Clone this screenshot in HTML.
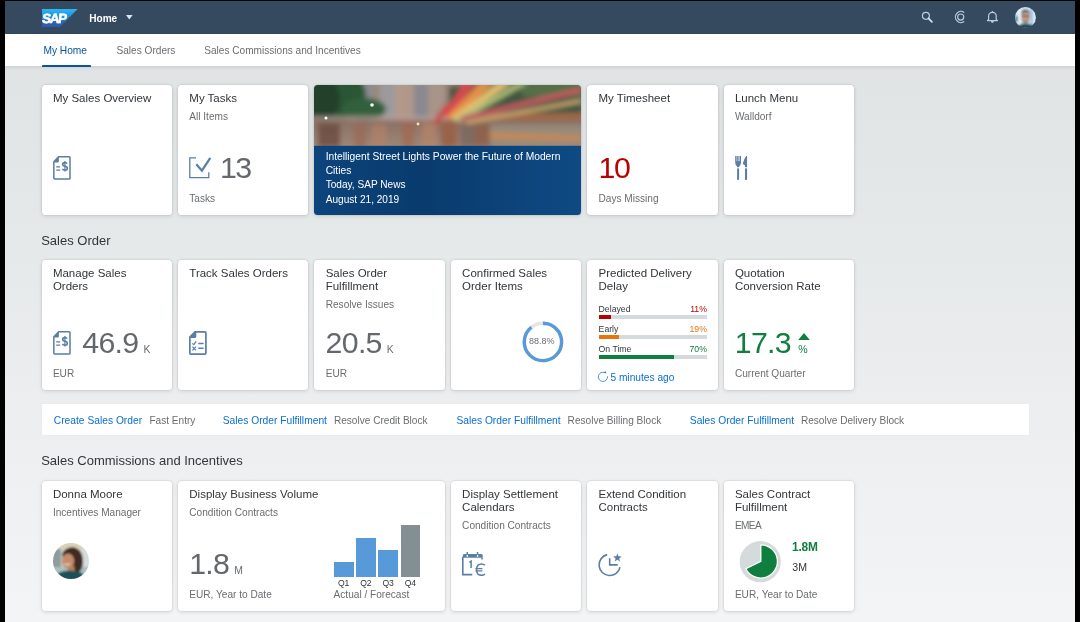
<!DOCTYPE html>
<html><head><meta charset="utf-8">
<style>
html,body{margin:0;padding:0;}
body{width:1080px;height:622px;overflow:hidden;background:#000;position:relative;font-family:"Liberation Sans",sans-serif;}
#pg{position:absolute;left:5px;top:1px;width:1070px;height:621px;background:linear-gradient(to bottom,#dfe3e4 0%,#dfe3e4 8%,#f3f4f5 100%);overflow:hidden}
.t{position:absolute;white-space:nowrap;}
.tile{position:absolute;background:#fff;border-radius:3.5px;box-shadow:0 0 0 0.5px rgba(0,0,0,0.09),0 1px 4px rgba(0,0,0,0.13);overflow:hidden}
.u{font-size:10.4px;letter-spacing:0;margin-left:5px;color:#6a6d70}
</style></head><body>
<div id="pg"></div>
<div id="root" style="position:absolute;left:0;top:0;width:1080px;height:622px;will-change:transform">
<div style="position:absolute;left:5px;top:1px;width:1070px;height:32.8px;background:#354a5f"></div>
<svg style="position:absolute;left:41.5px;top:8.8px" width="36" height="18.2" viewBox="0 0 36 18">
<defs><linearGradient id="lg" x1="0" y1="0" x2="0" y2="1"><stop offset="0" stop-color="#2bb8f2"/><stop offset="0.6" stop-color="#1a7dd0"/><stop offset="0.75" stop-color="#2f5fb4"/><stop offset="1" stop-color="#3158ae"/></linearGradient></defs>
<path d="M0 0H35.6L18 18H0Z" fill="url(#lg)"/>
<text x="-0.2" y="13.7" font-family="Liberation Sans" font-weight="700" font-size="13.4" fill="#fff" stroke="#fff" stroke-width="0.55" letter-spacing="-1.3" transform="skewX(-6)" transform-origin="0 14">SAP</text>
</svg>
<div class="t " style="left:89.20px;top:11.80px;font-size:10.1px;line-height:13px;color:#ffffff;font-weight:700;">Home</div>
<svg style="position:absolute;left:125.8px;top:15.4px" width="7" height="5" viewBox="0 0 7 5"><path d="M0 0H6.6L3.3 4.6Z" fill="#d1e8ff"/></svg>
<svg style="position:absolute;left:0;top:0" width="1080" height="34" viewBox="0 0 1080 34" fill="none" stroke="#bccde0">
<circle cx="925.9" cy="15.8" r="3.45" stroke-width="1.25"/><path d="M928.5 18.4L931.9 21.8" stroke="#d3e4f5" stroke-width="1.7" stroke-linecap="round"/>
<path d="M964.2 12.4A5.6 5.6 0 1 0 964.2 21.6" stroke-width="1.2"/><circle cx="960.7" cy="17" r="3.05" stroke-width="1.15"/>
<path d="M988.6 19.4V15.9A3.8 3.6 0 0 1 996.2 15.9V19.4L997.4 20.6H987.4Z" stroke-width="1.2" stroke-linejoin="round"/>
<circle cx="992.4" cy="11.9" r="0.8" fill="#bccde0" stroke="none"/>
<path d="M990.9 21.2H993.9Q993.6 22.8 992.4 22.8Q991.2 22.8 990.9 21.2Z" fill="#d3e4f5" stroke="none"/>
</svg>
<svg style="position:absolute;left:1014.8px;top:7px" width="21" height="21" viewBox="0 0 21 21">
<defs><clipPath id="ca"><circle cx="10.45" cy="10.45" r="10.45"/></clipPath><filter id="ba" filterUnits="userSpaceOnUse" x="-5" y="-5" width="31" height="31"><feGaussianBlur stdDeviation="0.9"/></filter></defs>
<g clip-path="url(#ca)"><g filter="url(#ba)"><rect x="-2" y="-2" width="25" height="25" fill="#cfe2ee"/>
<rect x="0" y="9" width="3.5" height="6" fill="#1f8a96"/><rect x="3" y="0" width="3" height="21" fill="#e8f2f8"/><rect x="16" y="0" width="2" height="21" fill="#8fbbe0"/><rect x="18" y="0" width="3" height="21" fill="#e6eff5"/>
<ellipse cx="10.6" cy="10.6" rx="4.4" ry="5.6" fill="#c49a84"/>
<path d="M6 8Q6 2.5 10.8 2.6Q15.4 2.8 15.2 8L14 6Q11 4.5 7.4 6.2Z" fill="#5e5e5e"/>
<rect x="6.6" y="8.4" width="8.2" height="1.2" fill="#4a4e52"/>
<path d="M7.6 12.6Q10.6 16.6 13.8 12.6L13.6 15Q10.6 17 7.8 15Z" fill="#8a7a70"/>
<path d="M1 22Q3 16.6 10.5 16.6Q18 16.6 20 22Z" fill="#1f4a52"/></g></g></svg>
<div style="position:absolute;left:5px;top:33.8px;width:1070px;height:32.7px;background:#fff;box-shadow:0 1px 4px rgba(0,0,0,0.12)"></div>
<div class="t " style="left:43.40px;top:44.07px;font-size:10.2px;line-height:13px;color:#0854a0;">My Home</div>
<div style="position:absolute;left:41.6px;top:64.5px;width:49px;height:2px;background:#0854a0;border-radius:1px 1px 0 0"></div>
<div class="t " style="left:116.50px;top:44.10px;font-size:10.1px;line-height:13px;color:#6a6d70;">Sales Orders</div>
<div class="t " style="left:204.20px;top:44.10px;font-size:10.1px;line-height:13px;color:#6a6d70;">Sales Commissions and Incentives</div>
<div class="tile" style="left:41.50px;top:84.60px;width:130.50px;height:130.50px;"></div>
<div class="t " style="left:52.90px;top:91.52px;font-size:11.5px;line-height:13px;color:#32363a;">My Sales Overview</div>
<svg style="position:absolute;left:52.70px;top:155.90px" width="18" height="24" viewBox="0 0 18 24" fill="none" stroke="#5a7ea4">
<path d="M5.6 0.8H16.1Q17 0.8 17 1.7V22.2Q17 23 16.1 23H1.8Q0.85 23 0.85 22.1V5.7Z" stroke-width="1.5"/>
<path d="M0.6 6.2L5.9 0.6V5.2Q5.9 6.5 4.6 6.5H0.6Z" fill="#5a7ea4" stroke="none"/>
<path d="M3.2 10.9H7.1M3.2 14.1H7.1" stroke-width="1.3"/>
<path d="M14.1 7.7Q13.5 6.6 11.9 6.6Q9.6 6.6 9.6 8.5Q9.6 9.9 11.9 10.3Q14.3 10.7 14.3 12.4Q14.3 14.1 11.9 14.1Q10.1 14.1 9.4 12.8" stroke-width="1.6"/><path d="M11.9 5V15.6" stroke-width="1.2"/>
</svg>
<div class="tile" style="left:177.90px;top:84.60px;width:130.50px;height:130.50px;"></div>
<div class="t " style="left:189.30px;top:91.52px;font-size:11.5px;line-height:13px;color:#32363a;">My Tasks</div>
<div class="t " style="left:189.30px;top:110.00px;font-size:10.1px;line-height:13px;color:#6a6d70;">All Items</div>
<svg style="position:absolute;left:189.10px;top:156.70px" width="23" height="22" viewBox="0 0 23 22" fill="none" stroke="#5a7ea4">
<path d="M7 0.8H0.8V20.6H19.8V15.3" stroke-width="1.3"/>
<path d="M7.3 7.2L12.9 13.6L21.3 0.9" stroke-width="2.2"/></svg>
<div class="t " style="left:219.90px;top:149.00px;font-size:30.3px;line-height:38px;color:#64686d;letter-spacing:-1.4px;">13</div>
<div class="t " style="left:189.30px;top:191.80px;font-size:10.1px;line-height:13px;color:#6a6d70;">Tasks</div>
<div class="tile news" style="left:314.30px;top:84.60px;width:266.90px;height:130.50px;">
<svg width="267" height="131" viewBox="0 0 267 131" style="position:absolute;left:0;top:0">
<defs>
<linearGradient id="sky" x1="0" y1="0" x2="1" y2="0"><stop offset="0" stop-color="#2c3b2f"/><stop offset="0.2" stop-color="#8a7c70"/><stop offset="0.3" stop-color="#b59a8a"/><stop offset="0.45" stop-color="#a8928a"/><stop offset="0.55" stop-color="#8a7466"/><stop offset="1" stop-color="#5f6650"/></linearGradient>
<linearGradient id="grd" x1="0" y1="0" x2="0" y2="1"><stop offset="0" stop-color="#8a6e62"/><stop offset="1" stop-color="#a08a7a"/></linearGradient>
<filter id="bl" filterUnits="userSpaceOnUse" x="-10" y="-10" width="290" height="90"><feGaussianBlur stdDeviation="2.6"/></filter>
<filter id="bl2" filterUnits="userSpaceOnUse" x="-10" y="-10" width="290" height="90"><feGaussianBlur stdDeviation="0.7"/></filter>
<linearGradient id="ov" x1="0" y1="0" x2="1" y2="0"><stop offset="0" stop-color="#0d447c"/><stop offset="0.4" stop-color="#093b6d"/><stop offset="1" stop-color="#0f4a84"/></linearGradient>
</defs>
<g filter="url(#bl)">
<rect x="-5" y="-5" width="280" height="75" fill="url(#sky)"/>
<rect x="44" y="-2" width="16" height="38" fill="#8e8c90"/>
<rect x="66" y="-2" width="15" height="36" fill="#9c9a9e"/>
<rect x="100" y="-2" width="14" height="34" fill="#8a8890"/>
<rect x="116" y="-2" width="14" height="26" fill="#a89488"/>
<ellipse cx="20" cy="10" rx="32" ry="26" fill="#2c5636"/><ellipse cx="50" cy="24" rx="22" ry="11" fill="#33603c"/><ellipse cx="8" cy="14" rx="18" ry="22" fill="#20402a"/>
<rect x="-5" y="31" width="140" height="6" fill="#b8a09a" opacity="0.7"/>
<path d="M135 2L267 -5V40H135Z" fill="#3f5640"/>
<path d="M200 -5H267V12H210Z" fill="#557048"/>
<rect x="160" y="28" width="110" height="10" fill="#c0704a" opacity="0.75"/>
<rect x="-5" y="35" width="280" height="30" fill="url(#grd)"/>
<rect x="175" y="40" width="95" height="22" fill="#958a7a"/>
<path d="M170 47L267 50V56L175 54Z" fill="#d08850" opacity="0.8"/>
<path d="M118 38L132 18L137 20L123 40Z" fill="#c84848"/>
<path d="M128 30L150 -2H162L134 33Z" fill="#d84a50"/>
<path d="M132 32L166 -2H180L138 35Z" fill="#e89048"/>
<path d="M136 33L184 -2H198L142 36Z" fill="#e0c070"/>
<path d="M140 34L204 -2H214L146 37Z" fill="#b8c880" opacity="0.9"/>
<path d="M145 32L267 2V8L150 36Z" fill="#c05860"/>
<path d="M150 36L267 14V18L154 39Z" fill="#c8a870"/>
<rect x="4" y="38" width="22" height="24" fill="#6a4a3e" opacity="0.8"/>
<rect x="40" y="38" width="12" height="24" fill="#9a6a56" opacity="0.8"/>
<rect x="58" y="40" width="14" height="22" fill="#b48268" opacity="0.7"/>
<rect x="88" y="36" width="12" height="26" fill="#a06a50" opacity="0.8"/>
<rect x="108" y="38" width="14" height="24" fill="#b8846a" opacity="0.7"/>
<rect x="127" y="36" width="16" height="26" fill="#9a6248"/>
<rect x="146" y="40" width="14" height="22" fill="#7a6660" opacity="0.8"/>
<rect x="160" y="38" width="16" height="24" fill="#8a5e48" opacity="0.8"/>
</g>
<g filter="url(#bl2)" fill="#fff"><circle cx="58" cy="20" r="1.8"/><circle cx="12" cy="33" r="1.5"/><circle cx="104" cy="39" r="1.4" fill="#ffe8b0"/></g>
<rect x="0" y="60.8" width="267" height="71" fill="url(#ov)"/>
</svg></div>
<div class="t " style="left:325.70px;top:149.95px;font-size:10.25px;line-height:14px;color:#ffffff;">Intelligent Street Lights Power the Future of Modern<br>Cities</div>
<div class="t " style="left:325.70px;top:178.20px;font-size:10.1px;line-height:13px;color:#ffffff;">Today, SAP News</div>
<div class="t " style="left:325.70px;top:192.50px;font-size:10.1px;line-height:13px;color:#ffffff;">August 21, 2019</div>
<div class="tile" style="left:587.10px;top:84.60px;width:130.50px;height:130.50px;"></div>
<div class="t " style="left:598.50px;top:91.52px;font-size:11.5px;line-height:13px;color:#32363a;">My Timesheet</div>
<div class="t " style="left:598.40px;top:148.90px;font-size:30.3px;line-height:38px;color:#bb0000;letter-spacing:-1.2px;">10</div>
<div class="t " style="left:598.50px;top:191.80px;font-size:10.1px;line-height:13px;color:#6a6d70;">Days Missing</div>
<div class="tile" style="left:723.50px;top:84.60px;width:130.50px;height:130.50px;"></div>
<div class="t " style="left:734.90px;top:91.52px;font-size:11.5px;line-height:13px;color:#32363a;">Lunch Menu</div>
<div class="t " style="left:734.90px;top:110.00px;font-size:10.1px;line-height:13px;color:#6a6d70;">Walldorf</div>
<svg style="position:absolute;left:734.80px;top:155.80px" width="14" height="24" viewBox="0 0 14 24" fill="#5a7ea4">
<path d="M0.2 0H6V6.6Q6 9.4 4.1 10.6V11.2H2.1V10.6Q0.2 9.4 0.2 6.6Z"/>
<rect x="1.6" y="0" width="0.5" height="5.2" fill="#fff"/><rect x="2.9" y="0" width="0.5" height="5.2" fill="#fff"/><rect x="4.2" y="0" width="0.5" height="5.2" fill="#fff"/>
<rect x="2.1" y="12.2" width="2" height="11.8" rx="0.8"/>
<path d="M11.1 0H12.1V11.2H10V9.4Q7.8 8.6 7.9 7.2Q9.2 2.6 11.1 0Z"/>
<rect x="10" y="12.2" width="2.1" height="11.8" rx="0.8"/></svg>
<div class="t " style="left:41.20px;top:232.60px;font-size:13.0px;line-height:16px;color:#32363a;">Sales Order</div>
<div class="tile" style="left:41.50px;top:259.60px;width:130.50px;height:130.50px;"></div>
<div class="t " style="left:52.90px;top:266.52px;font-size:11.5px;line-height:13px;color:#32363a;">Manage Sales<br>Orders</div>
<svg style="position:absolute;left:52.70px;top:331.10px" width="18" height="24" viewBox="0 0 18 24" fill="none" stroke="#5a7ea4">
<path d="M5.6 0.8H16.1Q17 0.8 17 1.7V22.2Q17 23 16.1 23H1.8Q0.85 23 0.85 22.1V5.7Z" stroke-width="1.5"/>
<path d="M0.6 6.2L5.9 0.6V5.2Q5.9 6.5 4.6 6.5H0.6Z" fill="#5a7ea4" stroke="none"/>
<path d="M3.2 10.9H7.1M3.2 14.1H7.1" stroke-width="1.3"/>
<path d="M14.1 7.7Q13.5 6.6 11.9 6.6Q9.6 6.6 9.6 8.5Q9.6 9.9 11.9 10.3Q14.3 10.7 14.3 12.4Q14.3 14.1 11.9 14.1Q10.1 14.1 9.4 12.8" stroke-width="1.6"/><path d="M11.9 5V15.6" stroke-width="1.2"/>
</svg>
<div class="t " style="left:82.30px;top:323.50px;font-size:30.3px;line-height:38px;color:#64686d;letter-spacing:-0.7px;">46.9<span class="u">K</span></div>
<div class="t " style="left:52.90px;top:366.80px;font-size:10.1px;line-height:13px;color:#6a6d70;">EUR</div>
<div class="tile" style="left:177.90px;top:259.60px;width:130.50px;height:130.50px;"></div>
<div class="t " style="left:189.30px;top:266.52px;font-size:11.5px;line-height:13px;color:#32363a;">Track Sales Orders</div>
<svg style="position:absolute;left:189.00px;top:330.90px" width="18" height="24" viewBox="0 0 18 24" fill="none" stroke="#5a7ea4">
<path d="M6 0.85H16Q16.9 0.85 16.9 1.8V22.1Q16.9 23.1 16 23.1H1.8Q0.85 23.1 0.85 22.1V6Z" stroke-width="1.7"/>
<path d="M0.5 6.6L6.6 0.5H7.3V5.4Q7.3 7 5.7 7H0.5Z" fill="#5a7ea4" stroke="none"/>
<path d="M3.2 12.4L4.8 13.7L7.1 10.4" stroke-width="1.2"/>
<path d="M3.4 15.6L7 19.3M7 15.6L3.4 19.3" stroke-width="1.2"/>
<path d="M9.3 12.5H14.6M9.3 17.2H14.6" stroke-width="1.6"/></svg>
<div class="tile" style="left:314.30px;top:259.60px;width:130.50px;height:130.50px;"></div>
<div class="t " style="left:325.70px;top:266.52px;font-size:11.5px;line-height:13px;color:#32363a;">Sales Order<br>Fulfillment</div>
<div class="t " style="left:325.70px;top:297.70px;font-size:10.1px;line-height:13px;color:#6a6d70;">Resolve Issues</div>
<div class="t " style="left:325.60px;top:323.70px;font-size:30.3px;line-height:38px;color:#64686d;letter-spacing:-0.7px;">20.5<span class="u">K</span></div>
<div class="t " style="left:325.70px;top:366.80px;font-size:10.1px;line-height:13px;color:#6a6d70;">EUR</div>
<div class="tile" style="left:450.70px;top:259.60px;width:130.50px;height:130.50px;"></div>
<div class="t " style="left:462.10px;top:266.52px;font-size:11.5px;line-height:13px;color:#32363a;">Confirmed Sales<br>Order Items</div>
<svg style="position:absolute;left:450.70px;top:259.60px" width="131" height="131" viewBox="0 0 130.5 130.5" fill="none">
<circle cx="91.60" cy="81.60" r="18.6" stroke="#e5e5e5" stroke-width="3.4"/>
<circle cx="91.60" cy="81.60" r="18.6" stroke="#5899da" stroke-width="3.4" stroke-dasharray="103.78 116.87" transform="rotate(-90 91.60 81.60)"/>
</svg>
<div class="t " style="left:529.00px;top:335.68px;font-size:9.0px;line-height:11px;color:#6a6d70;">88.8%</div>
<div class="tile" style="left:587.10px;top:259.60px;width:130.50px;height:130.50px;"></div>
<div class="t " style="left:598.50px;top:266.52px;font-size:11.5px;line-height:13px;color:#32363a;">Predicted Delivery<br>Delay</div>
<div class="t " style="left:598.60px;top:304.09px;font-size:8.7px;line-height:11px;color:#32363a;">Delayed</div>
<div class="t " style="right:373.10px;top:304.09px;font-size:8.7px;line-height:11px;color:#bb0000;text-align:right;">11%</div>
<div style="position:absolute;left:598.7px;top:314.9px;width:108.2px;height:4.1px;background:#d5dadd"></div>
<div style="position:absolute;left:598.7px;top:314.9px;width:11.90px;height:4.1px;background:#bb0000"></div>
<div class="t " style="left:598.60px;top:323.89px;font-size:8.7px;line-height:11px;color:#32363a;">Early</div>
<div class="t " style="right:373.10px;top:323.89px;font-size:8.7px;line-height:11px;color:#e9730c;text-align:right;">19%</div>
<div style="position:absolute;left:598.7px;top:335.0px;width:108.2px;height:4.1px;background:#d5dadd"></div>
<div style="position:absolute;left:598.7px;top:335.0px;width:20.56px;height:4.1px;background:#e9730c"></div>
<div class="t " style="left:598.60px;top:344.19px;font-size:8.7px;line-height:11px;color:#32363a;">On Time</div>
<div class="t " style="right:373.10px;top:344.19px;font-size:8.7px;line-height:11px;color:#107e3e;text-align:right;">70%</div>
<div style="position:absolute;left:598.7px;top:355.0px;width:108.2px;height:4.1px;background:#d5dadd"></div>
<div style="position:absolute;left:598.7px;top:355.0px;width:75.74px;height:4.1px;background:#107e3e"></div>
<svg style="position:absolute;left:594.4px;top:368px" width="14" height="16" viewBox="0 0 14 16" fill="none" stroke="#3f8ee0" stroke-width="0.95">
<path d="M13.5 8.3A4.6 4.6 0 1 1 10.9 4.7"/><circle cx="11.3" cy="4.3" r="0.9" fill="#0a6ed1" stroke="none"/></svg>
<div class="t " style="left:610.40px;top:371.37px;font-size:10.2px;line-height:13px;color:#0a6ed1;">5 minutes ago</div>
<div class="tile" style="left:723.50px;top:259.60px;width:130.50px;height:130.50px;"></div>
<div class="t " style="left:734.90px;top:266.52px;font-size:11.5px;line-height:13px;color:#32363a;">Quotation<br>Conversion Rate</div>
<div class="t " style="left:734.80px;top:323.70px;font-size:30.3px;line-height:38px;color:#107e3e;letter-spacing:-0.7px;">17.3</div>
<svg style="position:absolute;left:798px;top:332.6px" width="12" height="7.3" viewBox="0 0 12 7.3"><path d="M0 7.2L6 0L12 7.2Z" fill="#107e3e"/></svg>
<div class="t " style="left:798.30px;top:343.03px;font-size:10.6px;line-height:13px;color:#107e3e;">%</div>
<div class="t " style="left:734.90px;top:366.80px;font-size:10.1px;line-height:13px;color:#6a6d70;">Current Quarter</div>
<div style="position:absolute;left:42px;top:403.6px;width:986.6px;height:31.3px;background:#fff;box-shadow:0 0 1px rgba(0,0,0,0.08)"></div>
<div class="t " style="left:53.80px;top:413.95px;font-size:10.25px;line-height:13px;color:#0a6ed1;">Create Sales Order</div>
<div class="t " style="left:149.40px;top:413.50px;font-size:10.1px;line-height:13px;color:#6a6d70;">Fast Entry</div>
<div class="t " style="left:222.70px;top:413.95px;font-size:10.25px;line-height:13px;color:#0a6ed1;">Sales Order Fulfillment</div>
<div class="t " style="left:333.90px;top:413.50px;font-size:10.1px;line-height:13px;color:#6a6d70;">Resolve Credit Block</div>
<div class="t " style="left:456.40px;top:413.95px;font-size:10.25px;line-height:13px;color:#0a6ed1;">Sales Order Fulfillment</div>
<div class="t " style="left:567.60px;top:413.50px;font-size:10.1px;line-height:13px;color:#6a6d70;">Resolve Billing Block</div>
<div class="t " style="left:689.80px;top:413.95px;font-size:10.25px;line-height:13px;color:#0a6ed1;">Sales Order Fulfillment</div>
<div class="t " style="left:800.90px;top:413.50px;font-size:10.1px;line-height:13px;color:#6a6d70;">Resolve Delivery Block</div>
<div class="t " style="left:41.20px;top:453.30px;font-size:13.0px;line-height:16px;color:#32363a;">Sales Commissions and Incentives</div>
<div class="tile" style="left:41.50px;top:480.90px;width:130.50px;height:130.50px;"></div>
<div class="t " style="left:52.90px;top:487.82px;font-size:11.5px;line-height:13px;color:#32363a;">Donna Moore</div>
<div class="t " style="left:52.90px;top:506.30px;font-size:10.1px;line-height:13px;color:#6a6d70;">Incentives Manager</div>
<svg style="position:absolute;left:52.9px;top:543px" width="36" height="36" viewBox="0 0 36 36">
<defs><clipPath id="cd"><circle cx="18" cy="18" r="18"/></clipPath><filter id="bd" filterUnits="userSpaceOnUse" x="-5" y="-5" width="46" height="46"><feGaussianBlur stdDeviation="0.8"/></filter></defs>
<g clip-path="url(#cd)"><g filter="url(#bd)"><rect x="-2" y="-2" width="40" height="40" fill="#c9cfcc"/>
<rect x="-2" y="-2" width="40" height="8" fill="#d9d2b8"/><rect x="-2" y="6" width="10" height="22" fill="#8e9c9c"/><rect x="28" y="6" width="10" height="24" fill="#d5dcdc"/>
<rect x="-2" y="24" width="40" height="6" fill="#a8c0c0"/>
<path d="M9 11Q13 3 22 4.5Q30 8 30 18Q30 26 26 29L20 29Q17 22 18 15Q14 12 10 15Z" fill="#3f2b22"/>
<ellipse cx="15" cy="18" rx="6.2" ry="7.4" fill="#c48d6a"/>
<path d="M15 24Q19 25 21 22L22 29H15Z" fill="#b88060"/>
<path d="M11.5 20.8Q14 22.6 17 21" stroke="#f2e6dc" stroke-width="1.1" fill="none"/>
<path d="M-2 38Q2 28 17 27.5Q32 28 38 38Z" fill="#1e4f56"/></g></g></svg>
<div class="tile" style="left:177.90px;top:480.90px;width:267.60px;height:130.50px;"></div>
<div class="t " style="left:189.30px;top:487.82px;font-size:11.5px;line-height:13px;color:#32363a;">Display Business Volume</div>
<div class="t " style="left:189.30px;top:506.30px;font-size:10.1px;line-height:13px;color:#6a6d70;">Condition Contracts</div>
<div class="t " style="left:189.20px;top:544.50px;font-size:30.3px;line-height:38px;color:#64686d;letter-spacing:-0.7px;">1.8<span class="u">M</span></div>
<div class="t " style="left:189.30px;top:588.10px;font-size:10.1px;line-height:13px;color:#6a6d70;">EUR, Year to Date</div>
<div style="position:absolute;left:333.75px;top:562px;width:19.8px;height:14.60px;background:#5899da"></div>
<div class="t" style="left:328.75px;top:578.02px;width:29.8px;text-align:center;font-size:8.6px;line-height:11px;color:#32363a">Q1</div>
<div style="position:absolute;left:356px;top:538px;width:19.8px;height:38.60px;background:#5899da"></div>
<div class="t" style="left:351.00px;top:578.02px;width:29.8px;text-align:center;font-size:8.6px;line-height:11px;color:#32363a">Q2</div>
<div style="position:absolute;left:378.25px;top:549.75px;width:19.8px;height:26.85px;background:#5899da"></div>
<div class="t" style="left:373.25px;top:578.02px;width:29.8px;text-align:center;font-size:8.6px;line-height:11px;color:#32363a">Q3</div>
<div style="position:absolute;left:400.5px;top:525.25px;width:19.8px;height:51.35px;background:#848f94"></div>
<div class="t" style="left:395.50px;top:578.02px;width:29.8px;text-align:center;font-size:8.6px;line-height:11px;color:#32363a">Q4</div>
<div class="t " style="left:333.60px;top:587.50px;font-size:10.1px;line-height:13px;color:#6a6d70;">Actual / Forecast</div>
<div class="tile" style="left:450.70px;top:480.90px;width:130.50px;height:130.50px;"></div>
<div class="t " style="left:462.10px;top:487.82px;font-size:11.5px;line-height:13px;color:#32363a;">Display Settlement<br>Calendars</div>
<div class="t " style="left:462.10px;top:519.00px;font-size:10.1px;line-height:13px;color:#6a6d70;">Condition Contracts</div>
<svg style="position:absolute;left:462.1px;top:552.1px" width="24" height="24" viewBox="0 0 24 24" fill="none" stroke="#5a7ea4">
<path d="M0.8 3.4Q0.8 1.9 2.2 1.9H19.3Q20.7 1.9 20.7 3.4V5.8H0.8Z" fill="#5a7ea4" stroke="none"/>
<rect x="4.5" y="0" width="1.5" height="2.6" fill="#5a7ea4" stroke="none"/><rect x="14.8" y="0" width="1.5" height="2.6" fill="#5a7ea4" stroke="none"/>
<rect x="4.6" y="2.8" width="1.3" height="2" fill="#fff" stroke="none"/><rect x="14.9" y="2.8" width="1.3" height="2" fill="#fff" stroke="none"/>
<path d="M0.8 5V22.6H10.3" stroke-width="1.6"/><path d="M19.95 5.5V7.4" stroke-width="1.5"/>
<path d="M7.4 10.3L9.1 9.1V16.1" stroke-width="1.5"/>
<path d="M23 13.3Q21.6 12 19.6 12Q14.6 12 14.6 17.7Q14.6 23.3 19.6 23.3Q21.6 23.3 23 22" stroke-width="1.5"/>
<path d="M13.4 16.6H20.4M13.4 18.9H20.4" stroke-width="1.3"/></svg>
<div class="tile" style="left:587.10px;top:480.90px;width:130.50px;height:130.50px;"></div>
<div class="t " style="left:598.50px;top:487.82px;font-size:11.5px;line-height:13px;color:#32363a;">Extend Condition<br>Contracts</div>
<svg style="position:absolute;left:592px;top:545px" width="40" height="40" viewBox="0 0 40 40" fill="none" stroke="#5a7ea4" stroke-width="1.6">
<path d="M15.17 9.61A10.6 10.6 0 1 0 28.06 22.14"/>
<path d="M17.7 13.2V19.9H25.7"/>
<path d="M25.40 8.40L26.51 11.37L29.68 11.51L27.20 13.48L28.05 16.54L25.40 14.79L22.75 16.54L23.60 13.48L21.12 11.51L24.29 11.37Z" fill="#5a7ea4" stroke="none"/>
</svg>
<div class="tile" style="left:723.50px;top:480.90px;width:130.50px;height:130.50px;"></div>
<div class="t " style="left:734.90px;top:487.82px;font-size:11.5px;line-height:13px;color:#32363a;">Sales Contract<br>Fulfillment</div>
<div class="t " style="left:734.90px;top:519.00px;font-size:10.1px;line-height:13px;color:#6a6d70;letter-spacing:-0.6px;">EMEA</div>
<svg style="position:absolute;left:0;top:0" width="1080" height="622" viewBox="0 0 1080 622">
<circle cx="760.3" cy="561.7" r="20.6" fill="#d5dadd"/>
<path d="M760.8 561.4V544.8A16.6 16.6 0 1 1 745.88 568.68Z" fill="#107e3e" stroke="#fff" stroke-width="1.3" stroke-linejoin="miter"/>
</svg>
<div class="t " style="left:792.00px;top:540.38px;font-size:11.9px;line-height:15px;color:#107e3e;font-weight:700;letter-spacing:-0.2px;">1.8M</div>
<div class="t " style="left:792.30px;top:560.63px;font-size:10.6px;line-height:13px;color:#32363a;">3M</div>
<div class="t " style="left:734.90px;top:588.10px;font-size:10.1px;line-height:13px;color:#6a6d70;">EUR, Year to Date</div>
</div>
</body></html>
